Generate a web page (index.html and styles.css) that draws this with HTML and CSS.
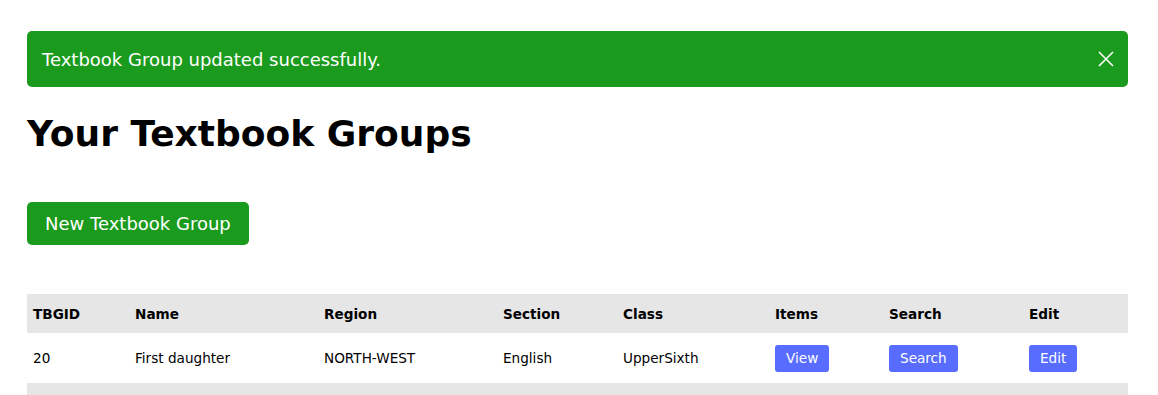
FILE: index.html
```html
<!DOCTYPE html>
<html lang="en">
<head>
<meta charset="utf-8">
<title>Your Textbook Groups</title>
<link rel="stylesheet" href="styles.css">
</head>
<body>
<main class="page">
  <div class="alert">
    <span class="alert-text">Textbook Group updated successfully.</span>
    <button class="alert-close" aria-label="Close">
      <svg width="16" height="16" viewBox="0 0 16 16"><path d="M1 1 L15 15 M15 1 L1 15" stroke="#fff" stroke-width="1.6" fill="none"/></svg>
    </button>
  </div>
  <h1 class="title">Your Textbook Groups</h1>
  <div class="actions">
    <a class="btn-new" href="#">New Textbook Group</a>
  </div>
  <table class="groups">
    <colgroup>
      <col class="c1"><col class="c2"><col class="c3"><col class="c4"><col class="c5"><col class="c6"><col class="c7"><col class="c8">
    </colgroup>
    <thead>
      <tr><th>TBGID</th><th>Name</th><th>Region</th><th>Section</th><th>Class</th><th>Items</th><th>Search</th><th>Edit</th></tr>
    </thead>
    <tbody>
      <tr>
        <td>20</td><td>First daughter</td><td>NORTH-WEST</td><td>English</td><td>UpperSixth</td>
        <td><a class="btn-sm" href="#">View</a></td>
        <td><a class="btn-sm" href="#">Search</a></td>
        <td><a class="btn-sm" href="#">Edit</a></td>
      </tr>
      <tr>
        <td>21</td><td>Second daughter</td><td>NORTH-WEST</td><td>English</td><td>LowerSixth</td>
        <td><a class="btn-sm" href="#">View</a></td>
        <td><a class="btn-sm" href="#">Search</a></td>
        <td><a class="btn-sm" href="#">Edit</a></td>
      </tr>
    </tbody>
  </table>
</main>
</body>
</html>
```

FILE: styles.css
```css
html, body {
  margin: 0;
  padding: 0;
  background: #fff;
}
body {
  font-family: "DejaVu Sans", sans-serif;
  color: #000;
}
.page {
  padding: 31px 30px 0 27px;
}
.alert {
  display: flex;
  align-items: center;
  justify-content: space-between;
  height: 56px;
  box-sizing: border-box;
  padding: 0 14px 0 15px;
  background: #1b9b1d;
  border-radius: 5px;
  color: #fff;
  font-size: 18px;
}
.alert-close {
  display: flex;
  background: none;
  border: 0;
  padding: 0;
  cursor: pointer;
}
.title {
  font-size: 36px;
  font-weight: bold;
  margin: 26px 0 0;
  line-height: 42px;
}
.actions {
  margin-top: 47px;
}
.btn-new {
  display: inline-block;
  background: #1b9b1d;
  color: #fff;
  text-decoration: none;
  font-size: 18px;
  line-height: 21px;
  padding: 11px 18px;
  border-radius: 5px;
}
.groups {
  margin-top: 49px;
  width: 100%;
  border-collapse: collapse;
  table-layout: fixed;
  font-size: 13.6px;
}
.c1 { width: 102px; }
.c2 { width: 189px; }
.c3 { width: 179px; }
.c4 { width: 120px; }
.c5 { width: 152px; }
.c6 { width: 114px; }
.c7 { width: 140px; }
.c8 { width: auto; }
.groups th {
  text-align: left;
  font-weight: bold;
  background: #e6e6e6;
  padding: 11px 6px;
  height: 17px;
}
.groups td {
  padding: 11px 6px;
  height: 28px;
  vertical-align: middle;
}
.groups tbody tr:nth-child(even) td {
  background: #e6e6e6;
}
.btn-sm {
  display: inline-block;
  background: #586cff;
  color: #fff;
  text-decoration: none;
  font-size: 13.6px;
  line-height: 17px;
  padding: 5px 11px;
  border-radius: 3px;
}
```
